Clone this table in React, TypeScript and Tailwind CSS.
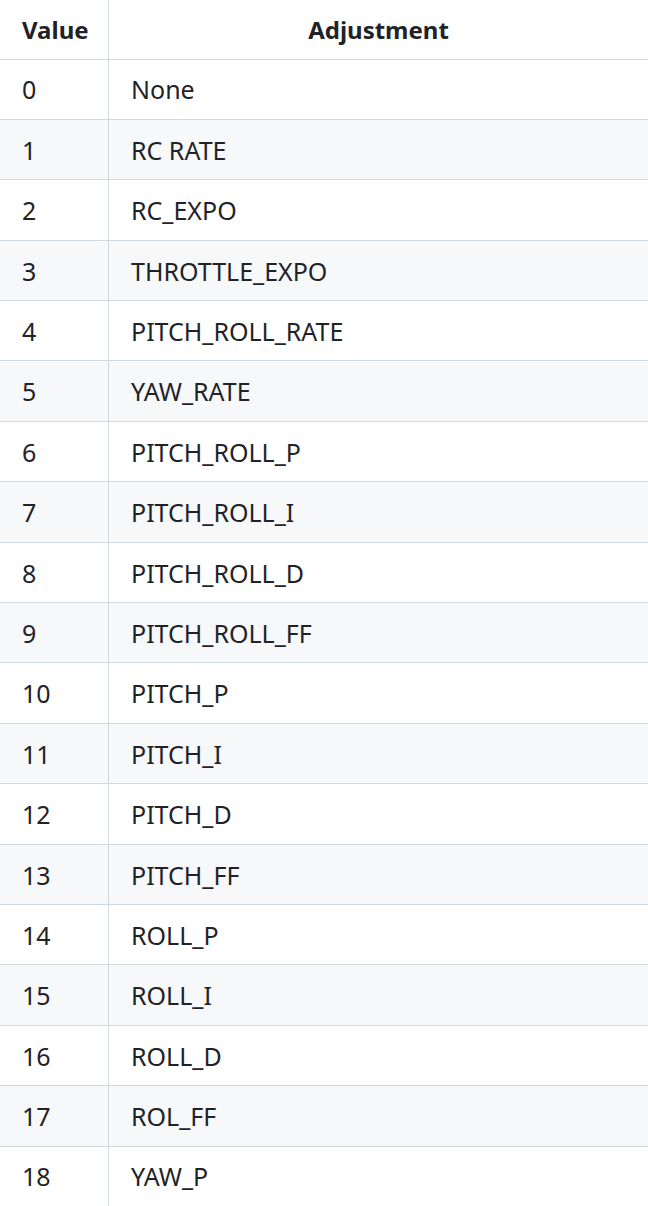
const rows = [
  "None",
  "RC RATE",
  "RC_EXPO",
  "THROTTLE_EXPO",
  "PITCH_ROLL_RATE",
  "YAW_RATE",
  "PITCH_ROLL_P",
  "PITCH_ROLL_I",
  "PITCH_ROLL_D",
  "PITCH_ROLL_FF",
  "PITCH_P",
  "PITCH_I",
  "PITCH_D",
  "PITCH_FF",
  "ROLL_P",
  "ROLL_I",
  "ROLL_D",
  "ROL_FF",
  "YAW_P",
];

export default function App() {
  return (
    <div className="h-[1206px] w-[648px] overflow-hidden bg-white text-[25px] text-[#1f2328] [font-family:'Noto_Sans',sans-serif]">
      <div className="grid h-[58.5px] grid-cols-[109px_1fr] items-center">
        <div className="flex h-full items-center border-r border-[#d1d9e0] pl-[22px] pt-[2px] text-[24px] font-bold">Value</div>
        <div className="pt-[2px] text-center text-[24px] font-bold">Adjustment</div>
      </div>
      {rows.map((name, i) => (
        <div
          key={i}
          className={`grid h-[60.4px] grid-cols-[109px_1fr] border-t border-[#d1d9e0] ${
            i % 2 === 1 ? "bg-[#f6f8fa]" : "bg-white"
          }`}
        >
          <div className="flex items-center border-r border-[#d1d9e0] pl-[22px] pt-[2px]">{i}</div>
          <div className="flex items-center pl-[22px] pt-[2px]">{name}</div>
        </div>
      ))}
    </div>
  );
}
